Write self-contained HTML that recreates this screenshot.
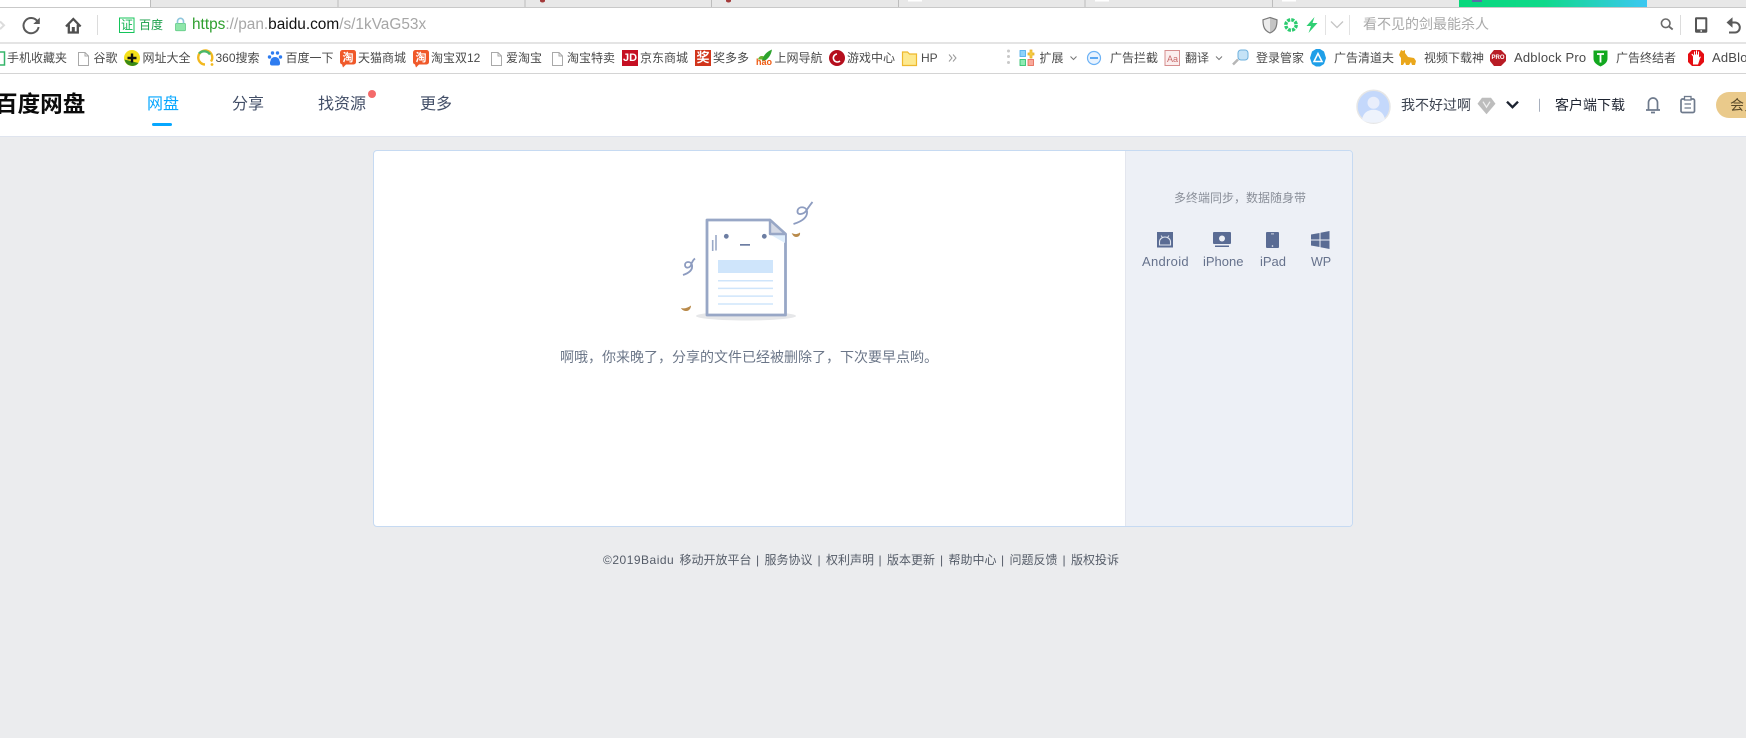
<!DOCTYPE html>
<html lang="zh-CN"><head><meta charset="utf-8"><title>百度网盘</title>
<style>
html,body{margin:0;padding:0}
body{width:1746px;height:738px;overflow:hidden;position:relative;background:#ebecee;font-family:"Liberation Sans","Noto Sans CJK SC",sans-serif}
.r{position:absolute}
.t{position:absolute;white-space:nowrap;line-height:18px}
.b{top:49px;font-size:12px;color:#4a4a4a}
.n{top:96px;font-size:16px;color:#424e67}
.f{top:551px;font-size:12px;color:#555c68}
.l{top:253px;font-size:13px;color:#66728c}
svg{position:absolute;left:0;top:0}
</style></head><body>
<!-- tab strip -->
<div class="r" style="left:0;top:0;width:1746px;height:7px;background:#e8e8e8;border-bottom:1px solid #c9c9c9"></div>
<div class="r" style="left:0;top:0;width:150px;height:7px;background:#fff"></div>
<div class="r" style="left:1459px;top:0;width:188px;height:7px;background:linear-gradient(90deg,#08d87c 0%,#10d98a 45%,#3cc8f2 100%)"></div>
<!-- address bar -->
<div class="r" style="left:0;top:8px;width:1746px;height:34px;background:#fff"></div>
<div class="r" style="left:0;top:42px;width:1746px;height:2px;background:#e4e4e4"></div>
<!-- bookmarks -->
<div class="r" style="left:0;top:44px;width:1746px;height:29px;background:#fff;border-bottom:1px solid #d4d4d4"></div>
<!-- header -->
<div class="r" style="left:0;top:74px;width:1746px;height:62px;background:#fff;border-bottom:1px solid #dfe4ee"></div>
<!-- card -->
<div class="r" style="left:373px;top:150px;width:978px;height:375px;background:#fff;border:1px solid #c6daf2;border-radius:4px"></div>
<div class="r" style="left:1125px;top:151px;width:226px;height:375px;background:#edf0f6;border-left:1px solid #e3e6ee;border-radius:0 3px 3px 0"></div>

<svg width="1746" height="738" viewBox="0 0 1746 738" fill="none">
<!-- tab dividers -->
<g stroke="#bdbdbd"><path d="M150.500 0V7M338 0V7M525 0V7M711.500 0V7M898.500 0V7M1085 0V7M1272.500 0V7"/></g>
<path d="M540 0h5v1a2.500 1.500 0 0 1-5 0z" fill="#a33a3a"/><path d="M726 0h5v1a2.500 1.500 0 0 1-5 0z" fill="#a33a3a"/>
<rect x="908" y="0" width="14" height="1.500" fill="#fff"/><rect x="1095" y="0" width="14" height="1.500" fill="#fff"/><rect x="1282" y="0" width="14" height="1.500" fill="#fff"/>
<rect x="1472" y="0" width="10" height="2" fill="#5a6ca8"/>
<!-- toolbar left -->
<path d="M0 21.500l4 3.800-4 3.800" stroke="#dcdcdc" stroke-width="2"/>
<path d="M37.500 21.500A7.600 7.600 0 1 0 38.600 27" stroke="#5a5a5a" stroke-width="2"/>
<path d="M39.800 17.500v6.500h-6.500z" fill="#5a5a5a"/>
<path d="M66 26.500L73.300 19l7.300 7.500" stroke="#4f4f4f" stroke-width="2.300"/>
<path d="M68.800 24.500V32.500h9V24.500" stroke="#4f4f4f" stroke-width="2.300"/>
<rect x="71.800" y="27" width="3" height="5.500" fill="#4f4f4f"/>
<path d="M97.500 15V35" stroke="#dcdcdc"/>
<rect x="119.500" y="18" width="14.500" height="14.500" stroke="#14c45a" fill="#fff"/>
<rect x="175.500" y="23.300" width="10" height="7.500" rx="1" fill="#8fe6aa" stroke="#56c47c" stroke-width=".7"/>
<path d="M177.500 23.300v-2a3 3 0 0 1 6 0v2" stroke="#8ec6dc" stroke-width="1.600"/>
<!-- toolbar right -->
<path d="M1270 17.500l7 2.300c0 6.500 -1 10.500 -7 13.200c-6-2.700-7-6.700-7-13.200z" fill="#c4c4c4" stroke="#7a7a7a" stroke-width="1.200"/>
<path d="M1270 18.200v14c-5.500-2.700-6.300-6.700-6.300-12z" fill="#ececec"/>
<circle cx="1291" cy="25" r="5.200" stroke="#2ccb6f" stroke-width="3.400" stroke-dasharray="3 1.100"/>
<path d="M1314.500 17l-8 9h4.500l-2.500 7 9-10h-5z" fill="#2fcf73"/>
<path d="M1325.500 15V35M1349.500 15V35" stroke="#e2e2e2"/>
<path d="M1331 21.500l6 6 6-6" stroke="#c4c4c4" stroke-width="1.300"/>
<circle cx="1665.700" cy="23.300" r="4.300" stroke="#6a6a6a" stroke-width="1.600"/>
<path d="M1669 26.500l3.700 3" stroke="#6a6a6a" stroke-width="1.800"/>
<path d="M1680.500 15V35" stroke="#dcdcdc"/>
<rect x="1695" y="17.300" width="12.300" height="15.400" rx="1.200" fill="#555"/>
<rect x="1697" y="19.300" width="8.300" height="10" fill="#fff"/><circle cx="1701.200" cy="31" r=".9" fill="#fff"/>
<path d="M1730 22.500h5a4.800 5 0 0 1 0 10h-6" stroke="#5a5a5a" stroke-width="2"/>
<path d="M1732.500 17.300l-6 5.200 6 5.200z" fill="#5a5a5a"/>

<!-- bookmarks icons -->
<g transform="translate(0,-6.500)">
<path d="M-2 58.500h6.500v13h-6.500z" fill="#fff" stroke="#36b56a" stroke-width="1.500"/>
<path d="M78.500 59h6.500l3.500 3.500v9.500h-10z" fill="#fff" stroke="#a9a9a9"/><path d="M85 59V62.500h3.500" stroke="#a9a9a9"/>
<path d="M491.500 59h6.500l3.500 3.500v9.500h-10z" fill="#fff" stroke="#a9a9a9"/><path d="M498 59V62.500h3.500" stroke="#a9a9a9"/>
<path d="M552.500 59h6.500l3.500 3.500v9.500h-10z" fill="#fff" stroke="#a9a9a9"/><path d="M559 59V62.500h3.500" stroke="#a9a9a9"/>
<circle cx="132" cy="64.500" r="8" fill="#f5e01a"/><path d="M124.500 66a8 8 0 0 0 14 3.500z" fill="#3a8a14"/><path d="M132 60v9M127.500 64.500h9" stroke="#111" stroke-width="2.400"/>
<path d="M211 68a7 7 0 1 0-6 3" stroke="#f2b81e" stroke-width="2.400"/><path d="M199 60a7 7 0 0 1 11 1" stroke="#49b86a" stroke-width="2.400"/><circle cx="212" cy="71" r="1.400" fill="#f2b81e"/>
<g fill="#2e7cf0"><ellipse cx="275" cy="67.500" rx="4.500" ry="4"/><circle cx="272.500" cy="59.500" r="1.700"/><circle cx="277.500" cy="59.500" r="1.700"/><circle cx="269.500" cy="63.500" r="1.700"/><circle cx="280.500" cy="63.500" r="1.700"/><rect x="270" y="67" width="10" height="5" rx="2"/></g>
<rect x="340" y="56.500" width="16" height="14.500" rx="2.500" fill="#f0592a"/><path d="M342 71l1 3 3-3z" fill="#f0592a"/>
<rect x="413" y="56.500" width="16" height="14.500" rx="2.500" fill="#f0592a"/><path d="M415 71l1 3 3-3z" fill="#f0592a"/>
<rect x="622" y="56.500" width="16" height="16" fill="#c60f23"/>
<rect x="695" y="56.500" width="16" height="16" fill="#d1351b"/>
<path d="M758 66c1-4 4-4 6-3l-1 3z" fill="#69b32e"/><path d="M762 67c1-5 5-9 10-11-1 6-4 10-9 12z" fill="#2da32e"/>
<circle cx="837" cy="64.500" r="8" fill="#b50e1d"/><path d="M837 60.500a4 4 0 1 0 3 7" stroke="#fff" stroke-width="1.600"/>
<path d="M902.500 58.500h5l2 2h7v11.500h-14z" fill="#fde98f" stroke="#eeb92e" stroke-width="1.200"/>
<path d="M949 61l3 3.500-3 3.500M953 61l3 3.500-3 3.500" stroke="#999"/>
<g fill="#c9c9c9"><circle cx="1008.500" cy="57.500" r="1.500"/><circle cx="1008.500" cy="63" r="1.500"/><circle cx="1008.500" cy="69" r="1.500"/></g>
<rect x="1020" y="57" width="5.500" height="6" fill="#8fd2f9" stroke="#45a8ea" stroke-width=".8"/>
<rect x="1020" y="66" width="5.500" height="6" fill="#90eab4" stroke="#22bd62" stroke-width=".8"/>
<rect x="1028" y="66" width="5.500" height="6" fill="#f9a99b" stroke="#e4634f" stroke-width=".8"/>
<path d="M1028 59.500h2v-3h2v3h2v2h-2v3h-2v-3h-2z" fill="#f6d24a" stroke="#e7a91d" stroke-width=".7"/>
<path d="M1070.500 63l3 3 3-3" stroke="#777"/>
<circle cx="1094" cy="64.500" r="6.500" fill="#e8f3ff" stroke="#6cb2f5" stroke-width="1.200"/><rect x="1090" y="63.500" width="8" height="2" fill="#5ca8f2"/>
<rect x="1165" y="57" width="14.500" height="15" fill="#fbeeee" stroke="#d68f8f"/>
<path d="M1216 63l3 3 3-3" stroke="#777"/>
<rect x="1238" y="56.500" width="10" height="10" rx="3" fill="#c5e3f7" stroke="#6eb1dd"/><path d="M1238 66l-5 5" stroke="#b6b6b6" stroke-width="2.500"/>
<path d="M1312 58l4-2.500h4l4 2.500 2 6.500-2 6-4 2.500h-4l-4-2.500-2-6z" fill="#1f9fe8"/><path d="M1318 60l-4 8h8z" stroke="#fff" stroke-width="1.500"/>
<path d="M1401 56.500l2 1 2-1v3l3 4 6 1 2 3-1 4h-3l-1-3-2 3h-3l-1-3-2 3h-2v-7l-2-3z" fill="#eaa71c"/>
<path d="M1494 56.500h7l5 5v6l-5 5h-7l-4-5v-6z" fill="#b81c25"/>
<path d="M1593.500 57h14v8c0 4-3 6-7 8-4-2-7-4-7-8z" fill="#12a81f"/><path d="M1597 60.500h7M1600.500 60.500V69" stroke="#fff" stroke-width="1.800"/>
<path d="M1692 56.500h8l4 4v8l-4 4h-8l-4-4v-8z" fill="#e50d12"/><path d="M1693 71v-8l-1.500-2c0-1 1-1 1.500 0l1 1v-4h1v3h1v-4h1v4h1v-3h1v6l1-1c1 0 1 1 0 2l-2 6z" fill="#fff"/>
</g>

<!-- header icons -->
<rect x="152" y="123" width="20" height="3" rx="1.500" fill="#06a7ff"/>
<circle cx="372" cy="94" r="4" fill="#f46a6a"/>
<g transform="translate(0,-13.300)">
<circle cx="1373.500" cy="120" r="16.500" fill="#c4d8fb" stroke="#e6e6e6" stroke-width="1.500"/>
<circle cx="1373.500" cy="116" r="6" fill="#e9eefb"/><path d="M1362 133c1-7 6-10 11.500-10s10.500 3 11.500 10c-6 4-17 4-23 0z" fill="#eef3fc"/>
<path d="M1482 111h9l4.500 6-9 10.500-9-10.500z" fill="#bdbdbd"/><path d="M1483 115l3.500 5.500 3.500-5.500" stroke="#f0f0f0" stroke-width="1.300"/>
<path d="M1507 115l5.500 5.500 5.500-5.500" stroke="#1d2330" stroke-width="2.400"/>
<path d="M1539.500 112v13" stroke="#a7afbd"/>
</g>
<g transform="translate(0,-14.500)">
<path d="M1646 124.500h14M1648.500 124v-7a4.500 4.500 0 0 1 9 0v7M1651 127h4" stroke="#6e7a8c" stroke-width="1.700"/>
</g>
<g transform="translate(0,-12)">
<rect x="1681" y="111" width="13.500" height="13.500" rx="1.500" stroke="#6e7a8c" stroke-width="1.700"/><rect x="1684.500" y="108.500" width="6.500" height="3.500" fill="#fff" stroke="#6e7a8c" stroke-width="1.300"/>
<path d="M1684.500 116h6.500M1684.500 120h6.500" stroke="#6e7a8c" stroke-width="1.300"/>
</g>
<path d="M1746 92h-17a13 13 0 0 0 0 26h17z" fill="#eaca8b"/>

<!-- illustration -->
<ellipse cx="746" cy="316" rx="50" ry="4.500" fill="#e6e7e9"/>
<path d="M707 220H770L785.500 234V315H707Z" fill="#fff" stroke="#98a7c6" stroke-width="2.800" stroke-linejoin="round"/>
<path d="M771 235H785L785 243Z" fill="#dfeefc"/>
<path d="M770 220V234H785.500Z" fill="#d4d9e5" stroke="#98a7c6" stroke-width="2.400" stroke-linejoin="round"/>
<circle cx="726.300" cy="236.300" r="2.400" fill="#6d7ea3"/><circle cx="764.300" cy="236.300" r="2.400" fill="#6d7ea3"/>
<rect x="740" y="244" width="10" height="1.700" fill="#6d7ea3"/>
<path d="M716 235V250.500M712.700 240V251" stroke="#9aa9c7" stroke-width="1.600"/>
<rect x="718" y="260" width="55" height="13" fill="#cfe5fb"/>
<path d="M718 280.800H773M718 288.400H773M718 296.100H773M718 304H773" stroke="#cfe5fb" stroke-width="1.500"/>
<path d="M793.500 224C800 222 808 218 807 211C806 206 798 206 797.500 211C797 216 804 214 806 211C808 208 810 205 812.500 202" stroke="#8d9cc0" stroke-width="1.800"/>
<path d="M683 275C689 273 693 270 692 265C691 261 685 261 685 265C685 269 690 268 691 265C692 262 693 260 695 258.500" stroke="#8d9cc0" stroke-width="1.800"/>
<path d="M791.700 233c3 1.500 5.500 1.500 8.300-.500c.500 3-1.500 4.500-3.800 4.500s-3.700-2-4.500-4z" fill="#b98a4a"/>
<path d="M681 308c3 1 6.500 0 10-2.500 0 3-2 5.500-4.500 5.500s-4.500-1-5.500-3z" fill="#b98a4a"/>

<!-- device icons -->
<rect x="1157" y="232" width="16" height="15.500" fill="#5a6c94"/>
<path d="M1159.500 245v-3a5.500 5 0 0 1 11 0v3z" fill="#5a6c94" stroke="#dfe4ee" stroke-width="1.100"/>
<path d="M1161 235.500l1.500 2M1169 235.500l-1.500 2" stroke="#dfe4ee"/>
<rect x="1213" y="232" width="18" height="12" rx="1" fill="#5a6c94"/><rect x="1215" y="245.500" width="14" height="1.500" fill="#5a6c94"/>
<circle cx="1222" cy="238.500" r="3" fill="#edf0f6"/>
<rect x="1266" y="232" width="13" height="16" rx="1" fill="#5a6c94"/>
<circle cx="1272.500" cy="246" r=".8" fill="#edf0f6"/><rect x="1271" y="233.500" width="3" height=".8" fill="#edf0f6"/>
<path d="M1311 234.500l8.500-1.500v6.500h-8.500zM1320.500 232.800l9-1.800v8.500h-9zM1311 240.500h8.500v6.500l-8.500-1.500zM1320.500 240.500h9v8.500l-9-1.800z" fill="#5a6c94"/>
</svg>

<!-- address texts -->
<div class="t" style="left:121px;top:16px;font-size:12px;color:#14b454">证</div>
<div class="t" style="left:139px;top:16px;font-size:12px;color:#1a9f4a">百度</div>
<div class="t" style="left:192px;top:16px;font-size:15.400px;color:#a6a6a6"><span style="color:#2f9f2f">https</span>://pan.<span style="color:#111">baidu.com</span>/s/1kVaG53x</div>
<div class="t" style="left:1363px;top:15px;font-size:14px;color:#a9a9a9">看不见的剑最能杀人</div>

<!-- bookmarks -->
<div class="t b" style="left:7px">手机收藏夹</div>
<div class="t b" style="left:93.500px">谷歌</div>
<div class="t b" style="left:142.500px">网址大全</div>
<div class="t b" style="left:215.500px">360搜索</div>
<div class="t b" style="left:285.500px">百度一下</div>
<div class="t b" style="left:358px">天猫商城</div>
<div class="t b" style="left:431px">淘宝双12</div>
<div class="t b" style="left:506px">爱淘宝</div>
<div class="t b" style="left:567px">淘宝特卖</div>
<div class="t b" style="left:640px">京东商城</div>
<div class="t b" style="left:713px">奖多多</div>
<div class="t b" style="left:774.500px">上网导航</div>
<div class="t b" style="left:847px">游戏中心</div>
<div class="t b" style="left:921px">HP</div>
<div class="t b" style="left:1039.500px">扩展</div>
<div class="t b" style="left:1110px">广告拦截</div>
<div class="t b" style="left:1185px">翻译</div>
<div class="t b" style="left:1256px">登录管家</div>
<div class="t b" style="left:1334px">广告清道夫</div>
<div class="t b" style="left:1424px">视频下载神</div>
<div class="t b" style="left:1514px;font-size:13px;letter-spacing:.2px">Adblock Pro</div>
<div class="t b" style="left:1616px">广告终结者</div>
<div class="t b" style="left:1712px;font-size:13px;letter-spacing:.2px">AdBlo</div>
<div class="t" style="left:340px;top:49px;font-size:11px;font-weight:700;color:#fff;width:16px;text-align:center">淘</div>
<div class="t" style="left:413px;top:49px;font-size:11px;font-weight:700;color:#fff;width:16px;text-align:center">淘</div>
<div class="t" style="left:622px;top:49px;font-size:11px;font-weight:700;color:#fff;width:16px;text-align:center">JD</div>
<div class="t" style="left:695px;top:49px;font-size:13px;font-weight:700;color:#fff;width:16px;text-align:center">奖</div>
<div class="t" style="left:754px;top:57px;font-size:9px;font-weight:700;color:#ef5a12;width:20px;text-align:center;line-height:10px">hao</div>
<div class="t" style="left:1165px;top:50px;font-size:9px;color:#c86a6a;width:15px;text-align:center">Aa</div>
<div class="t" style="left:1490px;top:49px;font-size:6px;font-weight:700;color:#fff;width:16px;text-align:center">PRO</div>

<!-- header -->
<div class="t" style="left:-5px;top:89px;font-size:22.600px;line-height:32px;font-weight:700;color:#0b0b0b">百度网盘</div>
<div class="t n" style="left:147px;color:#06a7ff">网盘</div>
<div class="t n" style="left:232px">分享</div>
<div class="t n" style="left:318px">找资源</div>
<div class="t n" style="left:420px">更多</div>
<div class="t" style="left:1401px;top:96px;font-size:14px;color:#3c4350">我不好过啊</div>
<div class="t" style="left:1555px;top:96px;font-size:14px;color:#1d2330">客户端下载</div>
<div class="t" style="left:1730px;top:96px;font-size:14px;color:#5a4a2a">会员</div>

<!-- card content -->
<div class="t" style="left:560px;top:348px;font-size:14px;color:#6b7688">啊哦，你来晚了，分享的文件已经被删除了，下次要早点哟。</div>
<div class="t" style="left:1174px;top:189px;font-size:12px;color:#8a8f99">多终端同步，数据随身带</div>
<div class="t l" style="left:1142px;letter-spacing:.3px">Android</div>
<div class="t l" style="left:1203px">iPhone</div>
<div class="t l" style="left:1260px">iPad</div>
<div class="t l" style="left:1311px;font-size:12.500px">WP</div>

<!-- footer -->
<div class="t f" style="left:603px;letter-spacing:.5px">©2019Baidu</div>
<div class="t f" style="left:679.500px">移动开放平台</div>
<div class="t f" style="left:756px">|</div>
<div class="t f" style="left:764.500px">服务协议</div>
<div class="t f" style="left:817.500px">|</div>
<div class="t f" style="left:826px">权利声明</div>
<div class="t f" style="left:878.500px">|</div>
<div class="t f" style="left:887px">版本更新</div>
<div class="t f" style="left:940px">|</div>
<div class="t f" style="left:948.500px">帮助中心</div>
<div class="t f" style="left:1001px">|</div>
<div class="t f" style="left:1009.500px">问题反馈</div>
<div class="t f" style="left:1062.500px">|</div>
<div class="t f" style="left:1071px">版权投诉</div>
</body></html>
